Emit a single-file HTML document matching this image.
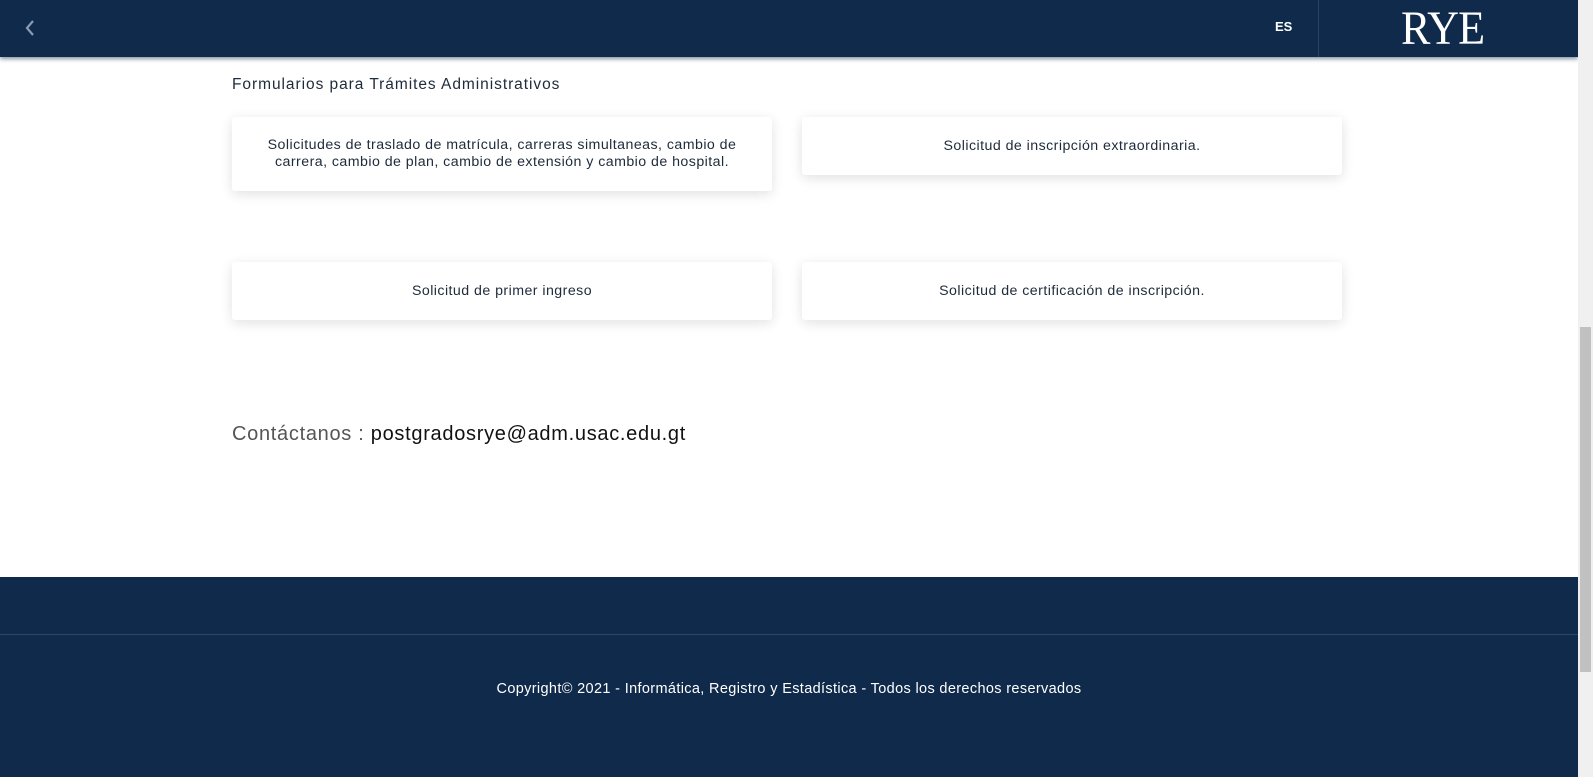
<!DOCTYPE html>
<html><head><meta charset="utf-8"><style>
*{margin:0;padding:0;box-sizing:border-box}
body{width:1593px;height:777px;overflow:hidden;background:#fff;font-family:"Liberation Sans",sans-serif;color:#1b2a3d;position:relative}
.hdr{position:absolute;left:0;top:0;width:1578px;height:57px;background:#0f2a4a;box-shadow:0 2px 4px rgba(15,42,74,.5)}
.es{position:absolute;left:1275px;top:19px;color:#fff;font-weight:bold;font-size:13px}
.sep{position:absolute;left:1318px;top:0;width:1px;height:57px;background:#2a4363}
.logo{position:absolute;left:1401px;top:1px;color:#fff;font-family:"Liberation Serif",serif;font-size:48px;letter-spacing:-1px;transform:scaleX(.92);transform-origin:left}
.h{position:absolute;left:232px;top:76px;font-size:15.5px;color:#1e2b3a;letter-spacing:.95px}
.card{position:absolute;width:540px;background:#fff;box-shadow:0 3px 12px rgba(0,0,0,.12);border-radius:3px;display:flex;align-items:center;justify-content:center;text-align:center;font-size:14.2px;line-height:17px;color:#1e2b3a;padding:0 22px;letter-spacing:.45px}
.contact{position:absolute;left:232px;top:423px;font-size:20px;color:#111;letter-spacing:.7px}
.contact span{color:#555;font-weight:300}
.ftr{position:absolute;left:0;top:577px;width:1578px;height:200px;background:#0f2a4a}
.line{position:absolute;left:0;top:57px;width:100%;height:1px;background:#2c4668}
.copy{position:absolute;left:0;width:100%;top:104px;text-align:center;color:#fff;font-size:14.5px;letter-spacing:.35px}
.sb{position:absolute;left:1578px;top:0;width:15px;height:777px;background:#f0f0f0}
.th{position:absolute;left:2px;top:327px;width:11px;height:345px;background:#c1c1c1}
</style></head><body>
<div class="hdr">
<svg style="position:absolute;left:24px;top:19px" width="12" height="18" viewBox="0 0 12 18"><path d="M9 2 L3 9 L9 16" stroke="#8a9bb3" stroke-width="2.2" fill="none"/></svg>
<div class="es">ES</div><div class="sep"></div><div class="logo">RYE</div>
</div>
<div class="h">Formularios para Trámites Administrativos</div>
<div class="card" style="left:232px;top:117px;height:74px">Solicitudes de traslado de matrícula, carreras simultaneas, cambio de carrera, cambio de plan, cambio de extensión y cambio de hospital.</div>
<div class="card" style="left:802px;top:117px;height:58px">Solicitud de inscripción extraordinaria.</div>
<div class="card" style="left:232px;top:262px;height:58px">Solicitud de primer ingreso</div>
<div class="card" style="left:802px;top:262px;height:58px">Solicitud de certificación de inscripción.</div>
<div class="contact"><span>Contáctanos :</span> postgradosrye@adm.usac.edu.gt</div>
<div class="ftr"><div class="line"></div><div class="copy">Copyright© 2021 - Informática, Registro y Estadística - Todos los derechos reservados</div></div>
<div class="sb"><div class="th"></div></div>
</body></html>
